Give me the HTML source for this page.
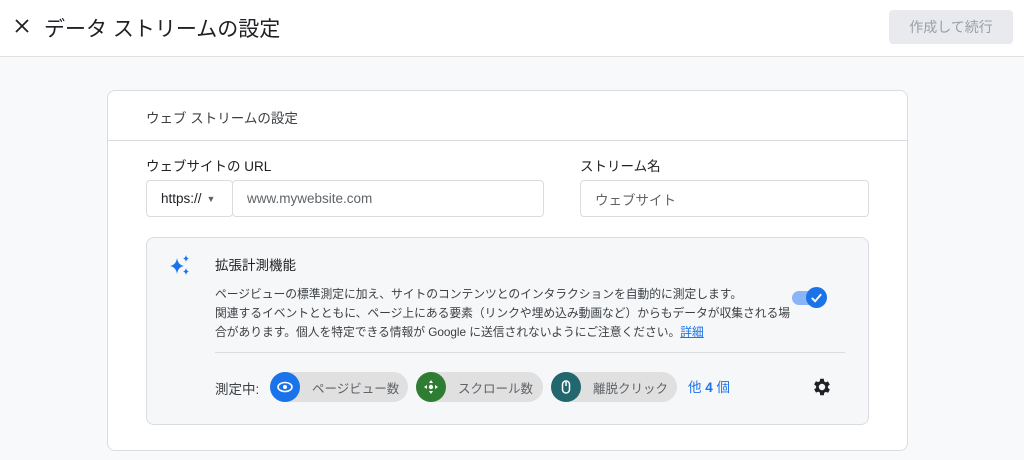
<!DOCTYPE html>
<html><head><meta charset="utf-8"><style>
*{box-sizing:border-box;margin:0;padding:0}
body{width:1024px;height:460px;overflow:hidden;background:#f8f9fa;font-family:"Liberation Sans","Noto Sans CJK JP",sans-serif;color:#202124;position:relative}
.a{position:absolute}
.hdr{left:0;top:0;width:1024px;height:57px;background:#fff;border-bottom:1px solid #e0e0e0}
.card{left:107px;top:90px;width:801px;height:361px;background:#fff;border:1px solid #dadce0;border-radius:8px}
.inp{border:1px solid #dadce0;border-radius:4px;background:#fff;height:37px;font-size:13.5px;color:#5f6368;display:flex;align-items:center;padding-left:14px}
.chip{height:30px;border-radius:15px;background:#e0e0e0;font-size:12.5px;color:#5f6368;display:flex;align-items:center;white-space:nowrap}
.ci{width:30px;height:30px;border-radius:15px;display:flex;align-items:center;justify-content:center;margin-right:12px;flex:none}
</style></head><body>
<div class="a hdr"></div>
<svg class="a" style="left:14px;top:18px" width="16" height="16" viewBox="0 0 16 16"><path d="M2 2L14 14M14 2L2 14" stroke="#202124" stroke-width="1.8"/></svg>
<div class="a" style="left:44px;top:13px;font-size:21px;white-space:nowrap">データ ストリームの設定</div>
<div class="a" style="left:889px;top:10px;width:124px;height:34px;background:#e8eaed;border-radius:4px;color:#9aa0a6;font-size:14px;display:flex;align-items:center;justify-content:center">作成して続行</div>
<div class="a card"></div>
<div class="a" style="left:146px;top:107px;font-size:13.5px;color:#3c4043">ウェブ ストリームの設定</div>
<div class="a" style="left:108px;top:140px;width:799px;height:1px;background:#dadce0"></div>
<div class="a" style="left:146px;top:155px;font-size:13.5px">ウェブサイトの URL</div>
<div class="a" style="left:580px;top:155px;font-size:13.5px">ストリーム名</div>
<div class="a inp" style="left:146px;top:180px;width:87px;color:#202124">https:// <span style="font-size:9px;margin-left:5px;color:#5f6368">▼</span></div>
<div class="a inp" style="left:232px;top:180px;width:312px">www.mywebsite.com</div>
<div class="a inp" style="left:580px;top:180px;width:289px">ウェブサイト</div>
<div class="a" style="left:146px;top:237px;width:723px;height:188px;background:#f6f7f9;border:1px solid #dadce0;border-radius:8px"></div>
<svg class="a" style="left:168px;top:253px" width="24" height="24" viewBox="0 0 24 24" fill="#1a73e8"><path d="M9 5Q10 12 16 13Q10 14 9 21Q8 14 2 13Q8 12 9 5Z"/><path d="M18 2Q18.5 5 21 5.5Q18.5 6 18 9Q17.5 6 15 5.5Q17.5 5 18 2Z"/><path d="M18 15Q18.5 18 21 18.5Q18.5 19 18 22Q17.5 19 15 18.5Q17.5 18 18 15Z"/></svg>
<div class="a" style="left:215px;top:254px;font-size:13.5px">拡張計測機能</div>
<div class="a" style="left:215px;top:285px;font-size:11.8px;line-height:19px;color:#3c4043;white-space:nowrap;letter-spacing:-0.05px">ページビューの標準測定に加え、サイトのコンテンツとのインタラクションを自動的に測定します。<br>関連するイベントとともに、ページ上にある要素（リンクや埋め込み動画など）からもデータが収集される場<br>合があります。個人を特定できる情報が Google に送信されないようにご注意ください。<span style="color:#1a73e8;text-decoration:underline">詳細</span></div>
<div class="a" style="left:792px;top:291px;width:32px;height:14px;border-radius:7px;background:#8ab4f8"></div>
<div class="a" style="left:806px;top:287px;width:21px;height:21px;border-radius:11px;background:#1a73e8;display:flex;align-items:center;justify-content:center"><svg width="13" height="13" viewBox="0 0 14 14"><path d="M2 7.5L5.5 11L12 3.5" stroke="#fff" stroke-width="2" fill="none"/></svg></div>
<div class="a" style="left:215px;top:352px;width:630px;height:1px;background:#dadce0"></div>
<div class="a" style="left:215px;top:378px;font-size:13.5px;color:#3c4043">測定中:</div>
<div class="a chip" style="left:270px;top:372px;width:138px"><div class="ci" style="background:#1a73e8"><svg width="18" height="18" viewBox="0 0 18 18"><ellipse cx="9" cy="9" rx="7" ry="4.5" stroke="#fff" stroke-width="1.6" fill="none"/><circle cx="9" cy="9" r="2" fill="#fff"/></svg></div>ページビュー数</div>
<div class="a chip" style="left:416px;top:372px;width:127px"><div class="ci" style="background:#2e7d32"><svg width="18" height="18" viewBox="0 0 18 18" fill="#fff"><path d="M9 2L11 5H7Z M9 16L7 13H11Z M2 9L5 7V11Z M16 9L13 11V7Z"/><circle cx="9" cy="9" r="2.2"/></svg></div>スクロール数</div>
<div class="a chip" style="left:551px;top:372px;width:126px"><div class="ci" style="background:#22676e"><svg width="18" height="18" viewBox="0 0 18 18"><rect x="5.5" y="3" width="7" height="12" rx="3.5" stroke="#fff" stroke-width="1.5" fill="none"/><path d="M9 4V8" stroke="#fff" stroke-width="1.5"/></svg></div>離脱クリック</div>
<div class="a" style="left:688px;top:376px;font-size:13.5px;color:#1a73e8">他 <b>4</b> 個</div>
<svg class="a" style="left:811px;top:376px" width="22" height="22" viewBox="0 0 24 24"><path fill="#202124" fill-rule="evenodd" d="M19.4 13a7.5 7.5 0 000-2l2.1-1.6-2-3.5-2.5 1a7 7 0 00-1.7-1L15 3h-4l-.4 2.7a7 7 0 00-1.7 1l-2.5-1-2 3.5L6.6 11a7.5 7.5 0 000 2l-2.1 1.6 2 3.5 2.5-1a7 7 0 001.7 1L11 21h4l.4-2.7a7 7 0 001.7-1l2.5 1 2-3.5zM13 15.5a3.5 3.5 0 110-7 3.5 3.5 0 010 7z" transform="translate(-1 0)"/></svg>
</body></html>
